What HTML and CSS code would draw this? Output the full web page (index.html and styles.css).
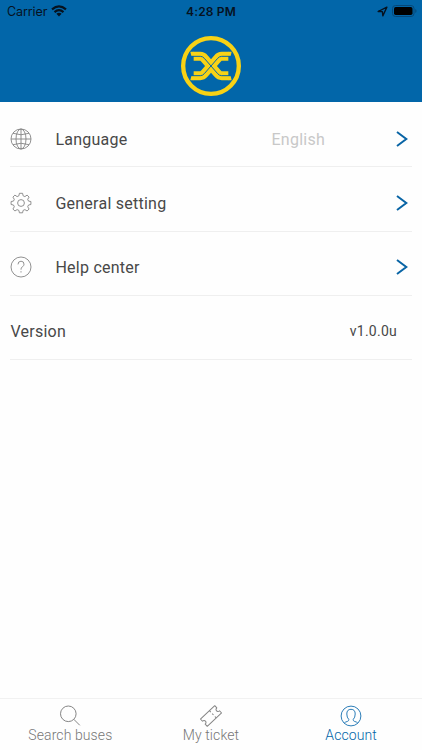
FILE: index.html
```html
<!DOCTYPE html>
<html lang="en">
<head>
<meta charset="utf-8">
<title>Account</title>
<link rel="stylesheet" href="styles.css">
</head>
<body>
<header class="header">
  <div class="status">
    <div class="status-left"><span class="carrier">Carrier</span>
      <svg class="wifi" width="16" height="12" viewBox="0 0 16 12"><g fill="none" stroke="#06121f" stroke-width="2.1"><path d="M1 4.4Q8-1.8 15 4.4"/><path d="M3.5 7.1Q8 3.2 12.5 7.1"/></g><path d="M5.4 8.7Q8 6.9 10.6 8.7L8 11.4z" fill="#06121f"/></svg>
    </div>
    <span class="clock">4:28 PM</span>
    <div class="status-right">
      <svg width="11" height="11" viewBox="0 0 10 10"><path d="M1 5L9 1L5.3 9L4.9 5.1z" fill="none" stroke="#06121f" stroke-width="1.2" stroke-linejoin="round"/></svg>
      <svg width="25" height="12" viewBox="0 0 25 12"><rect x=".5" y=".5" width="21.5" height="11" rx="3" fill="none" stroke="#064878"/><rect x="2" y="2" width="18.5" height="8" rx="1.7" fill="#000"/><path d="M23.3 4v4q1.2-.6 1.2-2t-1.2-2" fill="#064878"/></svg>
    </div>
  </div>
  <svg class="logo" width="62" height="62" viewBox="0 0 186 186">
    <circle cx="93" cy="93" r="83.5" fill="none" stroke="#f8d215" stroke-width="13"/>
    <g fill="none" stroke="#f8d215" stroke-width="27" stroke-linejoin="round">
      <path d="M41 64H61Q68 64 73 70L113 116Q118 122 125 122H145"/>
      <path d="M145 64H125Q118 64 113 70L73 116Q68 122 61 122H41"/>
    </g>
    <path d="M42 50.5H31L34 63H42zM144 50.5H155L152 63H144zM42 135.5H31L34 123H42zM144 135.5H155L152 123H144z" fill="#f8d215"/>
    <g fill="none" stroke="#0266a9" stroke-width="3">
      <path d="M31 64H61Q68 64 73 70L113 116Q118 122 125 122H155"/>
      <path d="M155 64H125Q118 64 113 70L73 116Q68 122 61 122H31"/>
    </g>
  </svg>
</header>
<main class="settings">
  <div class="row">
    <svg class="row-icon" width="22" height="22" viewBox="0 0 22 22"><circle cx="11" cy="11" r="10"/><ellipse cx="11" cy="11" rx="5" ry="10"/><path d="M11 1v20M1 11h20M3 5.3Q11 8.2 19 5.3M3 16.7Q11 13.8 19 16.7"/></svg>
    <span class="label language">Language</span><span class="value">English</span>
    <svg class="chevron" width="12" height="16" viewBox="0 0 12 16"><path d="M1 1L10.3 8L1 15"/></svg>
  </div>
  <div class="row">
    <svg class="row-icon" width="22" height="22" viewBox="0 0 22 22"><circle cx="11" cy="11" r="3.4"/><path d="M9.4 1.3h3.2l.5 2.5 1.8.8 2.2-1.5 2 2-1.4 2.2.8 1.8 2.4.4v3l-2.4.5-.8 1.8 1.4 2.2-2 2-2.2-1.4-1.8.8-.5 2.4H9.4l-.5-2.4-1.8-.8-2.2 1.4-2-2 1.4-2.2-.8-1.8-2.4-.5v-3l2.4-.4.8-1.8-1.4-2.2 2-2 2.2 1.5 1.8-.8z" stroke-linejoin="round"/></svg>
    <span class="label general">General setting</span>
    <svg class="chevron" width="12" height="16" viewBox="0 0 12 16"><path d="M1 1L10.3 8L1 15"/></svg>
  </div>
  <div class="row">
    <svg class="row-icon" width="22" height="22" viewBox="0 0 22 22"><circle cx="11" cy="11" r="10"/><path d="M8 8.4Q8 5.2 11 5.2T14 8.2Q14 9.7 12.4 10.8T11 13.7M11 15.2v1.3"/></svg>
    <span class="label help">Help center</span>
    <svg class="chevron" width="12" height="16" viewBox="0 0 12 16"><path d="M1 1L10.3 8L1 15"/></svg>
  </div>
  <div class="row">
    <span class="label version">Version</span><span class="build">v1.0.0u</span>
  </div>
</main>
<nav class="tabs">
  <div class="tab">
    <svg width="22" height="22" viewBox="0 0 22 22"><circle cx="9.3" cy="8.8" r="7.8"/><path d="M14.8 14.3L20.8 20.3"/></svg>
    <span class="search">Search buses</span>
  </div>
  <div class="tab">
    <svg width="22" height="22" viewBox="0 0 22 22"><g transform="rotate(-43 11 11)" stroke-linejoin="round"><path d="M1.2 6H20.8V9Q18.6 9.2 18.6 11T20.8 13V16H1.2V13Q3.4 12.8 3.4 11T1.2 9z"/><path d="M13.5 6v2M13.5 10v2M13.5 14v2"/></g></svg>
    <span class="ticket">My ticket</span>
  </div>
  <div class="tab active">
    <svg width="22" height="22" viewBox="0 0 22 22"><circle cx="11" cy="11" r="9.9"/><path d="M4.2 18.2Q5 17 7.7 16.3Q8.8 16 8.8 14.5Q6.8 12.5 6.8 9Q6.8 4.3 11 4.3T15.2 9Q15.2 12.5 13.2 14.5Q13.2 16 14.3 16.3Q17 17 17.8 18.2"/></svg>
    <span class="account">Account</span>
  </div>
</nav>
</body>
</html>
```
FILE: styles.css
```css
* { box-sizing: border-box; }
body {
  margin: 0;
  height: 750px;
  overflow: hidden;
  display: flex;
  flex-direction: column;
  background: #fefefe;
  font-family: Roboto, sans-serif;
  color: #484848;
}
svg { display: block; flex: none; }
.header {
  height: 102px;
  background: #0266a9;
}
.status {
  height: 22px;
  padding: 0 5px 0 7px;
  display: grid;
  grid-template-columns: 1fr auto 1fr;
  align-items: center;
  font-family: Inter, sans-serif;
  font-size: 12.5px;
  color: #06121f;
}
.status-left, .status-right { display: flex; align-items: center; gap: 4px; }
.status-right { justify-content: flex-end; }
.carrier { letter-spacing: -.1px; }
.clock { margin-right: 2px; font-weight: 600; font-size: 12px; letter-spacing: .15px; }
.logo { margin: 13px auto 0; }
.settings { flex: 1; padding: 0 10px; }
.row {
  height: 64px;
  padding-top: 7px;
  display: flex;
  align-items: center;
  border-bottom: 1px solid #efefef;
  font-size: 16px;
}
.row:first-child { height: 65px; padding-top: 10px; }
.row:nth-child(2) { height: 65px; padding-top: 8px; }
.row-icon {
  margin-left: -.4px;
  margin-right: 23.4px;
  fill: none;
  stroke: #858585;
  stroke-width: .9;
}
.label { padding-left: .4px; letter-spacing: .25px; }
.value { margin-left: auto; letter-spacing: .25px; color: #c8c8c8; }
.chevron { margin-left: auto; margin-right: 4px; fill: none; stroke: #0864a5; stroke-width: 2; }
.value + .chevron { margin-left: 71px; }
.build { margin-left: auto; margin-right: 15px; font-size: 14px; letter-spacing: .25px; }
.tabs {
  height: 52px;
  display: grid;
  grid-template-columns: repeat(3, 1fr);
  border-top: 1px solid #f1f1f1;
}
.tab {
  padding-top: 5.5px;
  display: flex;
  flex-direction: column;
  align-items: center;
  font-size: 14px;
  line-height: 16px;
  letter-spacing: .1px;
  font-weight: 300;
  color: #777;
}
.tab svg { fill: none; stroke: #858585; stroke-width: 1; }
.active { padding-right: 1px; color: #0266a9; }
.active svg { stroke: #2b7db8; }
```
